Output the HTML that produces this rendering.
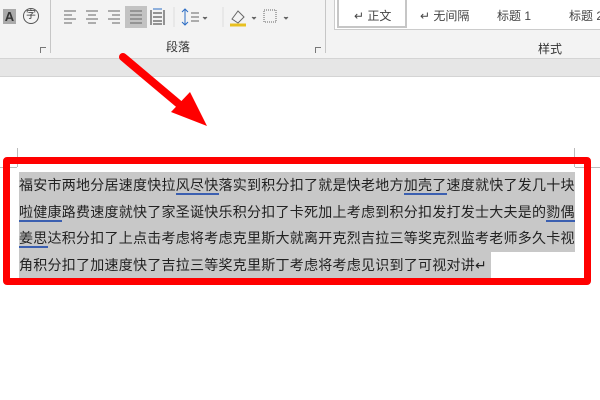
<!DOCTYPE html>
<html><head><meta charset="utf-8"><style>
body{margin:0;width:600px;height:400px;overflow:hidden;background:#fff;position:relative;font-family:"Liberation Sans","Noto Sans CJK SC",sans-serif}
.a{position:absolute}
.t{font-size:14px;letter-spacing:0.25px;color:#222;white-space:nowrap;height:26.5px;line-height:26.5px;background:#c8c8c8;left:19px;overflow:hidden}
u{text-decoration:none;border-bottom:2px solid #3b5fb0}
</style></head><body>
<div class="a" style="left:0;top:0;width:600px;height:58px;background:#f3f3f3"></div>
<div class="a" style="left:0;top:58px;width:600px;height:17px;background:#e6e6e6;border-top:1px solid #d4d4d4;border-bottom:1px solid #d4d4d4"></div>
<div class="a" style="left:50px;top:0;width:1px;height:53px;background:#c6c6c6"></div>
<div class="a" style="left:325px;top:0;width:1px;height:53px;background:#c6c6c6"></div>
<div class="a" style="left:3px;top:9px;width:13px;height:15px;background:#aaa;color:#333;font-size:13px;font-weight:bold;text-align:center;line-height:15px">A</div>
<div class="a" style="left:23px;top:8px;width:14px;height:14px;border:1px solid #555;border-radius:50%;font-size:10px;line-height:14px;text-align:center;color:#333">字</div>
<div class="a" style="left:40px;top:47px;width:5px;height:5px;border-left:1px solid #777;border-top:1px solid #777"></div>
<div class="a" style="left:315px;top:47px;width:5px;height:5px;border-left:1px solid #777;border-top:1px solid #777"></div>
<svg class="a" style="left:60px;top:5px" width="230" height="25" stroke="#666" stroke-width="1" fill="none">
<path d="M4 6h12M4 10h8M4 14h12M4 18h8"/>
<path d="M26 6h12M28 10h8M26 14h12M28 18h8"/>
<path d="M48 6h12M52 10h8M48 14h12M52 18h8"/>
<rect x="65" y="1" width="22" height="22" fill="#c3c3c3" stroke="none"/>
<path d="M70 6h12M70 10h12M70 14h12M70 18h12"/>
<path d="M91 5v15M104 5v15M93 8h9M93 12h9M93 16h9M93 19h9" stroke="#333"/>
<path d="M93 4h9" stroke="#2b6cc4"/>
<path d="M125 4v16M122 7l3-3 3 3M122 17l3 3 3-3" stroke="#2b6cc4"/>
<path d="M131 8h8M131 12h8M131 16h8"/>
<path d="M143 12l2 2 2-2" fill="#666"/>
<path d="M163 2v20M114 2v20" stroke="#ddd"/>
<path d="M172 14l6-8 6 6-6 6z"/><path d="M170 20h16" stroke="#e8c020" stroke-width="3"/>
<path d="M192 12l2 2 2-2" fill="#666"/>
<rect x="204" y="5" width="12" height="12" stroke-dasharray="1 1"/>
<path d="M224 12l2 2 2-2" fill="#666"/>
</svg>
<div class="a" style="left:166px;top:38px;font-size:12px;color:#333">段落</div>
<div class="a" style="left:334px;top:-1px;width:266px;height:30px;background:#fff;border-bottom:1px solid #ccc;border-left:1px solid #ccc"></div>
<div class="a" style="left:337px;top:-2px;width:66px;height:26px;border:2px solid #c6c6c6;background:#fff"></div>
<div class="a" style="left:354px;top:7px;font-size:12px;color:#444;white-space:nowrap">↵ 正文</div>
<div class="a" style="left:420px;top:7px;font-size:12px;color:#444;white-space:nowrap">↵ 无间隔</div>
<div class="a" style="left:497px;top:7px;font-size:12px;color:#444;white-space:nowrap">标题 1</div>
<div class="a" style="left:569px;top:7px;font-size:12px;color:#444;white-space:nowrap">标题 2</div>
<div class="a" style="left:538px;top:40px;font-size:12px;color:#333">样式</div>
<div class="a" style="left:17px;top:148px;width:1px;height:19px;background:#bbb"></div>
<div class="a" style="left:0;top:167px;width:17px;height:1px;background:#bbb"></div>
<div class="a" style="left:574px;top:148px;width:1px;height:19px;background:#bbb"></div>
<div class="a" style="left:575px;top:167px;width:25px;height:1px;background:#bbb"></div>
<div class="a t" style="top:172px;width:556px">福安市两地分居速度快拉<u>风尽快</u>落实到积分扣了就是快老地方<u>加壳了</u>速度就快了发几十块</div>
<div class="a t" style="top:198.5px;width:556px"><u>啦健康</u>路费速度就快了家圣诞快乐积分扣了卡死加上考虑到积分扣发打发士大夫是的<u>勠偶</u></div>
<div class="a t" style="top:225px;width:556px"><u>姜思</u>达积分扣了上点击考虑将考虑克里斯大就离开克烈吉拉三等奖克烈监考老师多久卡视</div>
<div class="a t" style="top:251.5px;padding-right:4px">角积分扣了加速度快了吉拉三等奖克里斯丁考虑将考虑见识到了可视对讲↵</div>
<div class="a" style="left:3px;top:157px;width:574px;height:114px;border:7px solid #f00;border-radius:4px"></div>
<svg class="a" style="left:110px;top:45px" width="110" height="90"><path d="M13 12L70 60" stroke="#f00" stroke-width="8" stroke-linecap="round"/><path d="M97 81L61 67L80 47z" fill="#f00"/></svg>
</body></html>
